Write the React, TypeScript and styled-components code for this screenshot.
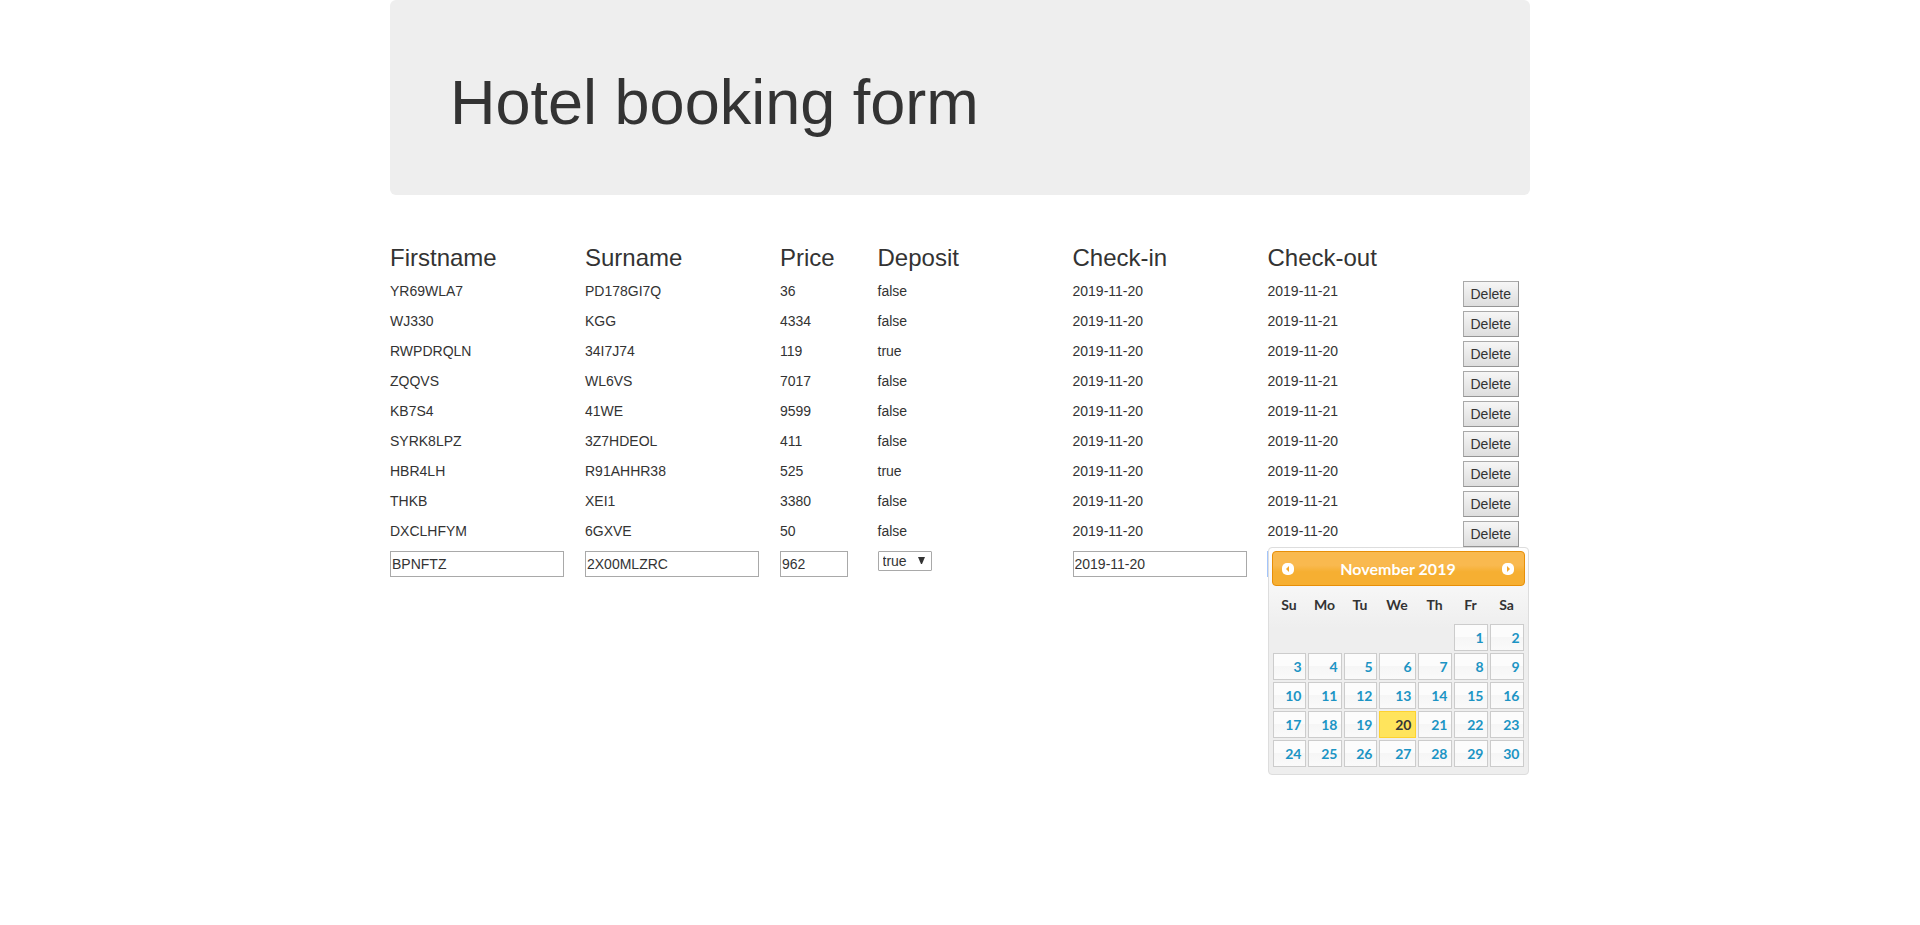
import React from "react";
import styled, { createGlobalStyle } from "styled-components";

const GlobalStyle = createGlobalStyle`
  *, *::before, *::after { box-sizing: border-box; }
  body {
    margin: 0;
    background: #fff;
    color: #333;
    font: 14px/20px "Liberation Sans", Arial, sans-serif;
  }
  input, button, select { font: inherit; color: inherit; margin: 0; }
`;

const Container = styled.main`
  max-width: 1170px;
  min-height: 100vh;
  margin: 0 auto;
  padding: 0 15px;
`;

const Jumbotron = styled.header`
  padding: 68px 60px 58px;
  margin-bottom: 30px;
  border-radius: 6px;
  background: #eee;
`;

const Title = styled.h1`
  margin: 0;
  font-size: 63px;
  line-height: 69px;
  font-weight: 500;
`;

const Bookings = styled.table`
  width: calc(100% + 30px);
  margin: 0 -15px;
  table-layout: fixed;
  border-collapse: collapse;
`;

const Column = styled.col<{ $span: number }>`
  width: calc(100% * ${(p) => p.$span} / 12);
`;

const Heading = styled.th`
  padding: 20px 15px 10px;
  font-size: 24px;
  line-height: 26px;
  font-weight: 500;
  text-align: left;
`;

const Cell = styled.td`
  height: 30px;
  padding: 0 15px;
  vertical-align: top;
`;

const DeleteButton = styled.button`
  display: block;
  height: 26px;
  padding: 0 7px;
  border: 1px solid;
  border-color: #a9a9a9 #949494 #949494 #a9a9a9;
  border-radius: 0;
  background: linear-gradient(#f6f6f6, #dddddd);
`;

const Field = styled.input<{ $short?: boolean; $active?: boolean }>`
  display: block;
  width: ${(p) => (p.$short ? 68 : 174)}px;
  height: 26px;
  padding: 1px;
  border: 1px solid ${(p) => (p.$active ? "#a3c5fb" : "#a9a9a9")};
  border-radius: 0;
  outline: 0;
  box-shadow: ${(p) => (p.$active ? "-1px 0 #a3c5fb" : "none")};
  background: #fff;
`;

const SelectBox = styled.span`
  position: relative;
  display: block;
  width: 54px;
`;

const Select = styled.select`
  appearance: none;
  display: block;
  width: 100%;
  height: 20px;
  padding: 0 4px;
  border: 1px solid #a9a9a9;
  border-radius: 1px;
  background: #fff;
  line-height: 18px;
`;

const Arrow = styled.svg`
  position: absolute;
  right: 7px;
  top: 6px;
  pointer-events: none;
`;

const PickerAnchor = styled.div`
  position: relative;
`;

const Picker = styled.section`
  position: absolute;
  top: -4px;
  left: 0;
  width: 261px;
  padding: 3px 3px 6px;
  border: 1px solid #ddd;
  border-radius: 4px;
  background: #eee linear-gradient(#fff, #eee) 0 0 / 100% 80px no-repeat;
  font-family: Lato, "Trebuchet MS", sans-serif;
  font-weight: 700;
`;

const PickerHeader = styled.div`
  display: flex;
  align-items: center;
  justify-content: space-between;
  height: 35px;
  padding: 0 9px;
  border: 1px solid #e78f08;
  border-radius: 4px;
  background: linear-gradient(#f9b94f 0 40%, #f6af32 60%);
  color: #fff;
  font-size: 16px;
`;

const MonthButton = styled.button`
  display: block;
  width: 12px;
  height: 12px;
  padding: 0;
  border: 0;
  background: none;
  line-height: 0;
`;

const Calendar = styled.table`
  width: 100%;
  table-layout: fixed;
  border-collapse: collapse;
`;

const DayCol = styled.col<{ $width: number }>`
  width: ${(p) => p.$width}px;
`;

const Weekday = styled.th`
  height: 37px;
  padding: 0;
  text-align: center;
`;

const DayCell = styled.td`
  height: 29px;
  padding: 1px;
`;

const Day = styled.button<{ $selected: boolean }>`
  display: block;
  width: 100%;
  height: 27px;
  padding: 0 3px;
  border: 1px solid ${(p) => (p.$selected ? "#fed22f" : "#ccc")};
  border-radius: 0;
  background: ${(p) => (p.$selected ? "#ffe45c" : "linear-gradient(#fcfcfc 50%, #f6f6f6 50%, #fafafa)")};
  color: ${(p) => (p.$selected ? "#363636" : "#1c94c4")};
  text-align: right;
`;

const columns: [string, number][] = [
  ["Firstname", 2],
  ["Surname", 2],
  ["Price", 1],
  ["Deposit", 2],
  ["Check-in", 2],
  ["Check-out", 2],
  ["", 1],
];

const bookings = [
  ["YR69WLA7", "PD178GI7Q", "36", "false", "2019-11-20", "2019-11-21"],
  ["WJ330", "KGG", "4334", "false", "2019-11-20", "2019-11-21"],
  ["RWPDRQLN", "34I7J74", "119", "true", "2019-11-20", "2019-11-20"],
  ["ZQQVS", "WL6VS", "7017", "false", "2019-11-20", "2019-11-21"],
  ["KB7S4", "41WE", "9599", "false", "2019-11-20", "2019-11-21"],
  ["SYRK8LPZ", "3Z7HDEOL", "411", "false", "2019-11-20", "2019-11-20"],
  ["HBR4LH", "R91AHHR38", "525", "true", "2019-11-20", "2019-11-20"],
  ["THKB", "XEI1", "3380", "false", "2019-11-20", "2019-11-21"],
  ["DXCLHFYM", "6GXVE", "50", "false", "2019-11-20", "2019-11-20"],
];

const weekdays: [string, number][] = [
  ["Su", 35], ["Mo", 36], ["Tu", 35], ["We", 39], ["Th", 36], ["Fr", 36], ["Sa", 36],
];

// November 2019 starts on a Friday.
const weeks = Array.from({ length: 5 }, (_, w) =>
  Array.from({ length: 7 }, (_, d) => w * 7 + d - 4)
);

function CircleArrow({ d }: { d: string }) {
  return (
    <svg width="12" height="12" viewBox="0 0 12 12" aria-hidden="true">
      <rect width="12" height="12" rx="5" fill="#fff" />
      <path d={d} fill="#f6a828" />
    </svg>
  );
}

function DatePicker() {
  return (
    <Picker aria-label="Choose check-out date">
      <PickerHeader>
        <MonthButton type="button" aria-label="Previous month">
          <CircleArrow d="M7 3v6L4 6z" />
        </MonthButton>
        <span>November 2019</span>
        <MonthButton type="button" aria-label="Next month">
          <CircleArrow d="M5 3v6l3-3z" />
        </MonthButton>
      </PickerHeader>
      <Calendar>
        <colgroup>
          {weekdays.map(([name, width]) => <DayCol key={name} $width={width} />)}
        </colgroup>
        <thead>
          <tr>{weekdays.map(([name]) => <Weekday key={name} scope="col">{name}</Weekday>)}</tr>
        </thead>
        <tbody>
          {weeks.map((week, i) => (
            <tr key={i}>
              {week.map((day) => (
                <DayCell key={day}>
                  {day > 0 && <Day type="button" $selected={day === 20}>{day}</Day>}
                </DayCell>
              ))}
            </tr>
          ))}
        </tbody>
      </Calendar>
    </Picker>
  );
}

export default function App() {
  return (
    <>
      <GlobalStyle />
      <Container>
        <Jumbotron>
          <Title>Hotel booking form</Title>
        </Jumbotron>
        <Bookings>
          <colgroup>
            {columns.map(([name, span]) => <Column key={name} $span={span} />)}
          </colgroup>
          <thead>
            <tr>
              {columns.map(([name]) => <Heading key={name} scope="col">{name}</Heading>)}
            </tr>
          </thead>
          <tbody>
            {bookings.map((row) => (
              <tr key={row[0]}>
                {row.map((value, i) => <Cell key={i}>{value}</Cell>)}
                <Cell><DeleteButton type="button">Delete</DeleteButton></Cell>
              </tr>
            ))}
            <tr>
              <Cell><Field aria-label="Firstname" defaultValue="BPNFTZ" /></Cell>
              <Cell><Field aria-label="Surname" defaultValue="2X00MLZRC" /></Cell>
              <Cell><Field $short aria-label="Price" defaultValue="962" /></Cell>
              <Cell>
                <SelectBox>
                  <Select aria-label="Deposit" defaultValue="true">
                    <option>true</option>
                    <option>false</option>
                  </Select>
                  <Arrow width="7" height="7" viewBox="0 0 7 7" aria-hidden="true">
                    <path d="M0 0h7L4 7H3z" fill="#333" />
                  </Arrow>
                </SelectBox>
              </Cell>
              <Cell><Field aria-label="Check-in" defaultValue="2019-11-20" /></Cell>
              <Cell>
                <PickerAnchor>
                  <Field aria-label="Check-out" $active />
                  <DatePicker />
                </PickerAnchor>
              </Cell>
              <Cell />
            </tr>
          </tbody>
        </Bookings>
      </Container>
    </>
  );
}
